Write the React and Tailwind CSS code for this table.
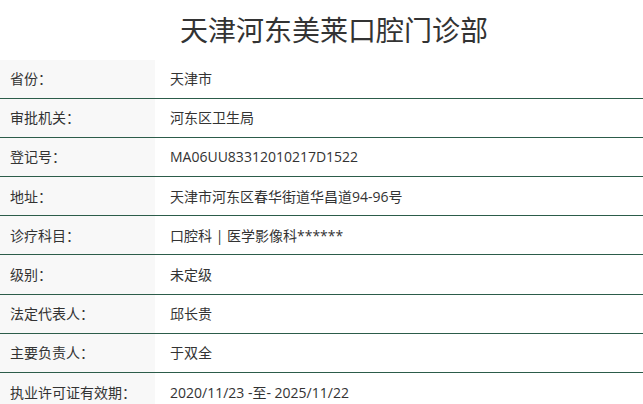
export default function App() {
  const rows = [
    ["省份：", "天津市"],
    ["审批机关：", "河东区卫生局"],
    ["登记号：", "MA06UU83312010217D1522"],
    ["地址：", "天津市河东区春华街道华昌道94-96号"],
    ["诊疗科目：", "口腔科 | 医学影像科******"],
    ["级别：", "未定级"],
    ["法定代表人：", "邱长贵"],
    ["主要负责人：", "于双全"],
    ["执业许可证有效期：", "2020/11/23 -至- 2025/11/22"],
  ];
  return (
    <div
      className="w-[643px] h-[404px] overflow-hidden bg-white text-[#333]"
      style={{ fontFamily: '"Open Sans", "Noto Sans CJK SC", sans-serif' }}
    >
      <div className="h-[59.5px] flex items-center justify-center pl-[25px]">
        <h1 className="text-[28px] leading-none text-[#333] font-normal">天津河东美莱口腔门诊部</h1>
      </div>
      {rows.map(([k, v], i) => (
        <div
          key={i}
          className={`flex h-[39.2px] ${i < rows.length - 1 ? "border-b-[1.5px] border-[#2c5c4a]" : ""}`}
        >
          <div className="w-[155px] bg-[#f8f8f8] flex items-center pl-[10px] text-[14px]">{k}</div>
          <div className="flex-1 flex items-center pl-[15px] text-[14px]">{v}</div>
        </div>
      ))}
    </div>
  );
}
